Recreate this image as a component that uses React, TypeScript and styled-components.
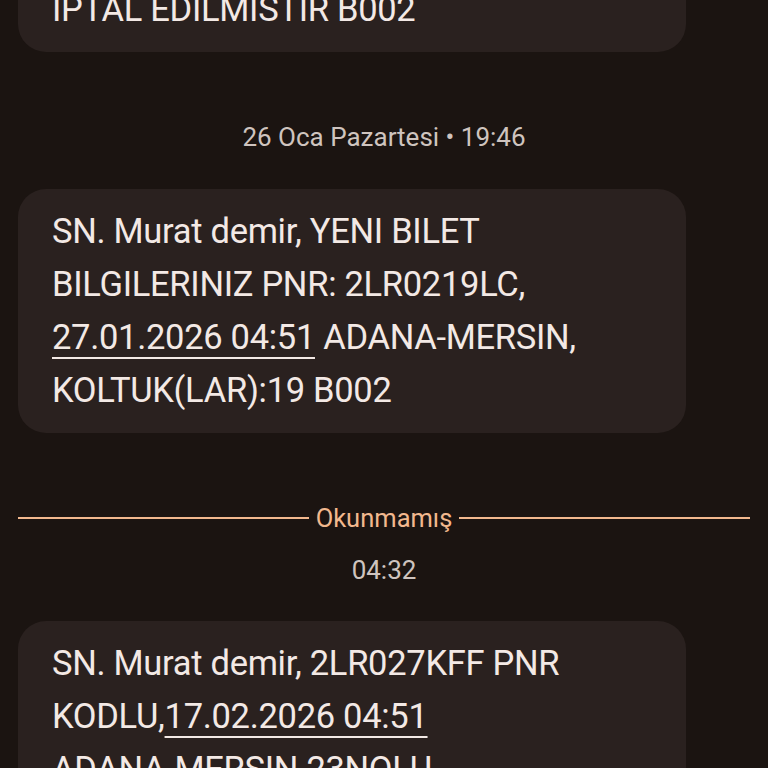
import React from "react";
import styled, { createGlobalStyle } from "styled-components";

const Global = createGlobalStyle`
  html, body { margin: 0; padding: 0; background: #1b1411; }
  body { font-family: Roboto, "Noto Sans", sans-serif; overflow: hidden; }
`;

const Screen = styled.div`
  width: 768px;
  height: 768px;
  overflow: hidden;
  background: #1b1411;
`;

const Feed = styled.div`
  display: flex;
  flex-direction: column;
  margin-top: -33px;
`;

const Bubble = styled.div`
  margin: 0 82px 0 18px;
  background: #2a211f;
  border-radius: 28px;
  padding: 16px 34px;
  color: #f3e9e5;
  font-size: 34.5px;
  line-height: 53px;
  letter-spacing: -0.3px;
`;

const Link = styled.span`
  text-decoration: underline;
  text-decoration-thickness: 2px;
  text-underline-offset: 8px;
`;

const Stamp = styled.div<{ $top: number; $bottom: number }>`
  text-align: center;
  color: #cfc4bf;
  font-size: 26px;
  line-height: 30px;
  margin: ${(p) => p.$top}px 0 ${(p) => p.$bottom}px;
`;

const Divider = styled.div`
  display: flex;
  align-items: center;
  gap: 7px;
  margin: 70px 18px 0;
  color: #f2b88e;
  font-size: 25.5px;
  line-height: 30px;
  &::before,
  &::after {
    content: "";
    flex: 1;
    height: 2px;
    background: #f2b88e;
  }
`;

export default function App() {
  return (
    <Screen>
      <Global />
      <Feed>
        <Bubble>IPTAL EDILMISTIR B002</Bubble>
        <Stamp $top={70} $bottom={37}>26 Oca Pazartesi • 19:46</Stamp>
        <Bubble>
          SN. Murat demir, YENI BILET
          <br />
          BILGILERINIZ PNR: 2LR0219LC,
          <br />
          <Link>27.01.2026 04:51</Link> ADANA-MERSIN,
          <br />
          KOLTUK(LAR):19 B002
        </Bubble>
        <Divider>Okunmamış</Divider>
        <Stamp $top={22} $bottom={36}>04:32</Stamp>
        <Bubble>
          SN. Murat demir, 2LR027KFF PNR
          <br />
          KODLU,<Link>17.02.2026 04:51</Link>
          <br />
          ADANA-MERSIN 23NOLU
        </Bubble>
      </Feed>
    </Screen>
  );
}
